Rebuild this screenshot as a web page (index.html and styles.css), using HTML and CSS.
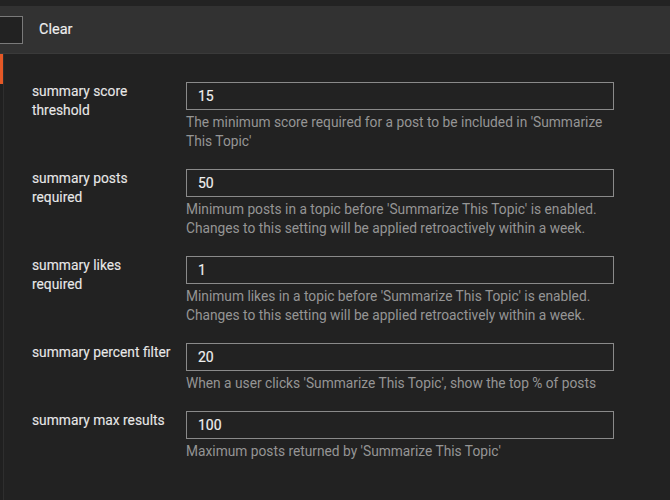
FILE: index.html
```html
<!DOCTYPE html>
<html>
<head>
<meta charset="utf-8">
<link rel="stylesheet" href="styles.css">
</head>
<body>
<div class="topstrip"></div>
<div class="header">
  <div class="filter-box"></div>
  <span class="clear">Clear</span>
</div>
<div class="main">
  <div class="side"><div class="side-active"></div></div>
  <div class="settings">
    <div class="row">
      <div class="label">summary score<br>threshold</div>
      <div class="field">
        <div class="input">15</div>
        <div class="desc">The minimum score required for a post to be included in 'Summarize This Topic'</div>
      </div>
    </div>
    <div class="row">
      <div class="label">summary posts<br>required</div>
      <div class="field">
        <div class="input">50</div>
        <div class="desc">Minimum posts in a topic before 'Summarize This Topic' is enabled. Changes to this setting will be applied retroactively within a week.</div>
      </div>
    </div>
    <div class="row">
      <div class="label">summary likes<br>required</div>
      <div class="field">
        <div class="input">1</div>
        <div class="desc">Minimum likes in a topic before 'Summarize This Topic' is enabled. Changes to this setting will be applied retroactively within a week.</div>
      </div>
    </div>
    <div class="row">
      <div class="label">summary percent filter</div>
      <div class="field">
        <div class="input">20</div>
        <div class="desc">When a user clicks 'Summarize This Topic', show the top % of posts</div>
      </div>
    </div>
    <div class="row">
      <div class="label">summary max results</div>
      <div class="field">
        <div class="input">100</div>
        <div class="desc">Maximum posts returned by 'Summarize This Topic'</div>
      </div>
    </div>
  </div>
</div>
</body>
</html>
```
FILE: styles.css
```css
html, body {
  margin: 0;
  padding: 0;
  background: #222222;
  font-family: Roboto, "Liberation Sans", sans-serif;
  width: 670px;
  height: 500px;
  overflow: hidden;
}
.topstrip {
  height: 6px;
  background: #232323;
}
.header {
  height: 47px;
  background: #323232;
  border-bottom: 1px solid #3a3a3a;
  display: flex;
  align-items: center;
}
.filter-box {
  width: 30px;
  height: 26px;
  margin-left: -9px;
  border: 1px solid #7a7a7a;
  background: #222;
}
.clear {
  margin-left: 16px;
  color: #eeeeee;
  font-size: 14.5px;
  font-weight: 400;
  -webkit-text-stroke: 0.15px #eeeeee;
}
.main {
  display: flex;
  height: 446px;
}
.side {
  width: 3px;
  border-right: 1px solid #2e2e2e;
  background: #202020;
}
.side-active {
  height: 30px;
  background: #e45826;
}
.settings {
  padding-top: 28px;
  padding-left: 28px;
}
.row {
  display: flex;
  margin-bottom: 18px;
}
.label {
  width: 154px;
  color: #e8e8e8;
  font-size: 13.8px;
  font-weight: 400;
  -webkit-text-stroke: 0.1px #e8e8e8;
  line-height: 19px;
}
.field {
  width: 428px;
}
.input {
  box-sizing: border-box;
  height: 28px;
  border: 1px solid #8a8a8a;
  background: #222;
  color: #f0f0f0;
  font-size: 14px;
  font-weight: 400;
  -webkit-text-stroke: 0.15px #f0f0f0;
  padding-left: 11px;
  line-height: 26px;
}
.row:nth-child(n+3) .input { margin-top: 0; }
.desc {
  margin-top: 3px;
  color: #959595;
  font-size: 13.75px;
  line-height: 19px;
}
```
